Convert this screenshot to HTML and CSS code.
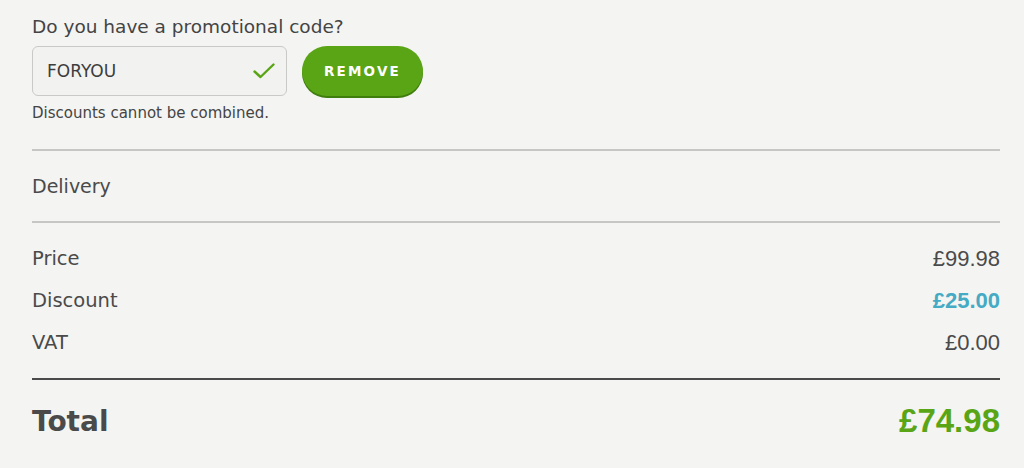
FILE: index.html
```html
<!DOCTYPE html>
<html>
<head>
    <title>Basket summary</title>
    <link rel="stylesheet" href="styles.css">
</head>
<body>
    <div class="summary">
        <div class="promo">
            <label for="promo-code" class="promo-title">Do you have a promotional code?</label>
            <div class="promo-row">
                <div class="promo-field">
                    <input type="text" id="promo-code" value="FORYOU" readonly>
                    <svg class="check" width="22" height="16" viewBox="0 0 22 16">
                        <path d="M1.5 8.5 L7.5 14 L20.5 1.5" fill="none" stroke="#5aa516" stroke-width="2.4" stroke-linecap="round" stroke-linejoin="round"/>
                    </svg>
                </div>
                <button class="remove-btn">REMOVE</button>
            </div>
            <p class="promo-note">Discounts cannot be combined.</p>
        </div>

        <div class="delivery">Delivery</div>

        <div class="lines">
            <div class="line"><span>Price</span><span class="amount">£99.98</span></div>
            <div class="line"><span>Discount</span><span class="amount discount">£25.00</span></div>
            <div class="line"><span>VAT</span><span class="amount">£0.00</span></div>
        </div>

        <div class="total">
            <span>Total</span>
            <span class="total-amount">£74.98</span>
        </div>
    </div>
</body>
</html>
```

FILE: styles.css
```css
body {
    background-color: #f4f4f2;
    font-family: "DejaVu Sans", sans-serif;
    color: #4a4a4a;
    margin: 0;
    padding: 0;
}

.summary {
    padding: 14px 24px 0 32px;
}

.promo-title {
    display: block;
    font-size: 18.5px;
    line-height: 26px;
    color: #444;
}

.promo-row {
    display: flex;
    align-items: center;
    gap: 15px;
    margin-top: 6px;
}

.promo-field {
    position: relative;
    width: 255px;
}

.promo-field input {
    width: 100%;
    height: 50px;
    box-sizing: border-box;
    padding: 0 40px 0 14px;
    border: 1px solid #c9c9c7;
    border-radius: 6px;
    background-color: #f2f2f0;
    font-family: "DejaVu Sans", sans-serif;
    font-size: 17px;
    color: #3d3d3d;
    outline: none;
}

.check {
    position: absolute;
    right: 12px;
    top: 17px;
}

.remove-btn {
    width: 121px;
    height: 50px;
    border: none;
    border-radius: 25px;
    background-color: #5aa516;
    box-shadow: 0 2px 0 #3f7d0c;
    color: #fff;
    font-family: "DejaVu Sans", sans-serif;
    font-weight: bold;
    font-size: 13.5px;
    letter-spacing: 2.2px;
    cursor: pointer;
}

.promo-note {
    margin: 8px 0 0;
    font-size: 15px;
    color: #444;
}

.delivery {
    margin-top: 27px;
    border-top: 2px solid #c6c6c4;
    border-bottom: 2px solid #c6c6c4;
    height: 70px;
    line-height: 70px;
    font-size: 19px;
}

.lines {
    padding: 15px 0 14px;
}

.line {
    display: flex;
    justify-content: space-between;
    height: 42px;
    line-height: 42px;
    font-size: 19.5px;
}

.amount {
    font-family: "Liberation Sans", Arial, sans-serif;
    font-size: 22px;
}

.discount {
    color: #45aac4;
    font-weight: bold;
}

.total {
    display: flex;
    justify-content: space-between;
    align-items: center;
    border-top: 2px solid #4a4a4a;
    height: 82px;
    font-size: 28px;
    font-weight: bold;
}

.total-amount {
    font-family: "Liberation Sans", Arial, sans-serif;
    font-size: 33px;
    color: #5aa516;
}
```
